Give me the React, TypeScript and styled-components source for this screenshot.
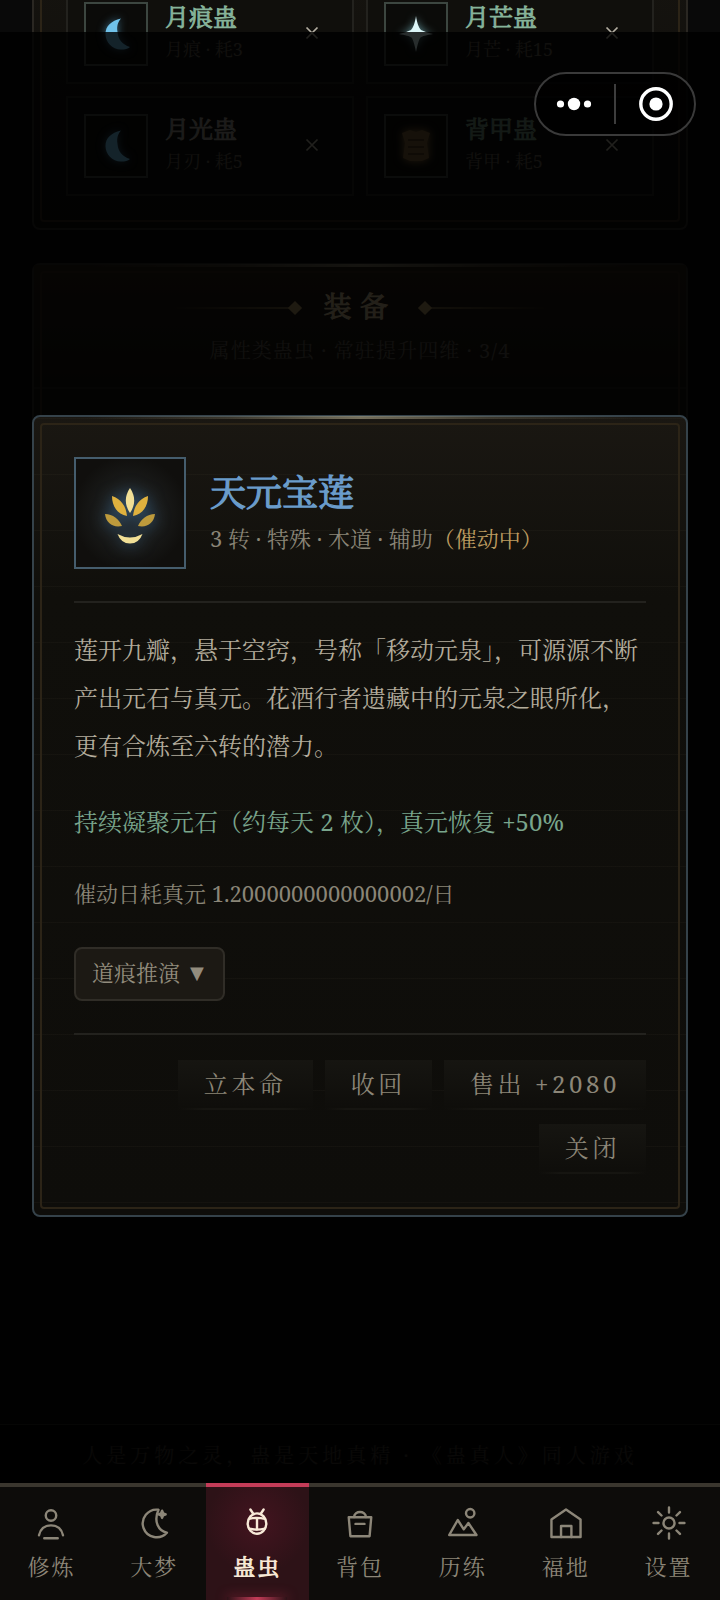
import React from "react";
import styled, { createGlobalStyle, css } from "styled-components";

const Global = createGlobalStyle`
  * { box-sizing: border-box; }
  body { margin: 0; background: #000; }
  button { font: inherit; color: inherit; cursor: pointer; }
`;

const serif = `"Noto Serif", "Noto Serif CJK SC", "Noto Serif SC", "Source Han Serif SC", "Songti SC", "Noto Sans CJK SC", serif`;

const Screen = styled.div`
  position: relative;
  width: 720px;
  height: 1600px;
  overflow: hidden;
  background: #090909;
  color: #948e80;
  font-family: ${serif};
  font-weight: 400;
`;

const Page = styled.main`
  height: 1483px;
  padding: 0 32px;
  display: flex;
  flex-direction: column;
  overflow: hidden;
`;

const framed = css`
  position: relative;
  border: 2px solid #2a2722;
  border-radius: 8px;
  background: linear-gradient(180deg, #15130f, #0e0d0a);
  &::before {
    content: "";
    position: absolute;
    inset: 6px;
    border: 2px solid #2c2417;
    border-radius: 4px;
    pointer-events: none;
  }
`;

const sheen = css`
  &::after {
    content: "";
    position: absolute;
    left: 0;
    right: 0;
    top: -1px;
    height: 3px;
    background: linear-gradient(90deg, transparent 8%, rgba(155, 148, 122, 0.25) 30%, rgba(155, 148, 122, 0.7) 50%, rgba(155, 148, 122, 0.25) 70%, transparent 92%);
  }
`;

const SlotPanel = styled.section`
  ${framed}
  flex: none;
  height: 250px;
  margin-top: -20px;
  padding: 4px 32px 32px;
  border-top: 0;
  border-radius: 0 0 8px 8px;
  &::before { top: -2px; border-top: 0; }
`;

const SlotGrid = styled.div`
  display: grid;
  grid-template-columns: 1fr 1fr;
  grid-auto-rows: 100px;
  gap: 12px;
`;

const Slot = styled.article`
  display: flex;
  align-items: center;
  gap: 16px;
  padding: 0 16px;
  border: 2px solid #23221e;
  background: #100f0c;
`;

const SlotIcon = styled.div`
  flex: none;
  width: 64px;
  height: 64px;
  display: grid;
  place-items: center;
  border: 2px solid #3c4640;
  background: #0b0b09;
`;

const SlotText = styled.div`
  flex: 1;
  display: flex;
  flex-direction: column;
  gap: 1px;
  padding: 0 0 6px 1px;
`;

const SlotName = styled.h3<{ $color: string }>`
  margin: 0;
  font-size: 24px;
  line-height: 34px;
  font-weight: 400;
  -webkit-text-stroke: 0.9px currentColor;
  color: ${(p) => p.$color};
`;

const SlotMeta = styled.span`
  font-size: 18px;
  line-height: 28px;
  color: #605b51;
`;

const SlotClose = styled.button`
  width: 44px;
  margin-right: 2px;
  padding: 0 0 2px;
  border: 0;
  background: none;
  display: grid;
  place-items: center;
  color: #b4afa3;
`;

const EquipPanel = styled.section`
  ${framed}
  ${sheen}
  flex: none;
  height: 900px;
  margin-top: 33px;
  text-align: center;
`;

const EquipHeader = styled.header`
  height: 124px;
  padding-top: 20px;
  border-bottom: 2px solid #201d18;
  background: linear-gradient(180deg, #241d14, #14120e);
`;

const EquipHeading = styled.div`
  display: flex;
  align-items: center;
  justify-content: center;
  gap: 24px;
  height: 46px;
`;

const EquipTitle = styled.h2`
  margin: -5px 0 0;
  font-size: 28px;
  line-height: 46px;
  letter-spacing: 8.4px;
  font-weight: 400;
  -webkit-text-stroke: 1px currentColor;
  color: #c2b08c;
`;

const Flourish = styled.span<{ $flip?: boolean }>`
  display: flex;
  align-items: center;
  transform: ${(p) => (p.$flip ? "scaleX(-1)" : "none")};
  &::before {
    content: "";
    width: 118px;
    height: 2px;
    background: linear-gradient(90deg, transparent, #66583a);
  }
  &::after {
    content: "";
    width: 10px;
    height: 10px;
    background: #a8925f;
    transform: rotate(45deg);
  }
`;

const EquipNote = styled.p`
  margin: 3px 0 0;
  font-size: 20px;
  line-height: 34px;
  letter-spacing: 1.1px;
  color: #5c574d;
`;

const Footer = styled.footer`
  position: absolute;
  left: 0;
  right: 0;
  top: 1424px;
  height: 59px;
  border-top: 1px solid #26231e;
  background: #050505;
  text-align: center;
  font-size: 20px;
  line-height: 62px;
  letter-spacing: 4px;
  white-space: nowrap;
  color: #37332d;
`;

const Backdrop = styled.div`
  position: absolute;
  inset: 32px 0 117px;
  background: rgba(0, 0, 0, 0.82);
`;

const Dialog = styled.section`
  ${framed}
  ${sheen}
  position: absolute;
  left: 32px;
  right: 32px;
  top: 415px;
  height: 802px;
  padding: 40px;
  border-color: #35424a;
  background:
    repeating-linear-gradient(180deg, transparent 0 1px, rgba(210, 190, 150, 0.03) 1px 2px, transparent 2px 56px),
    linear-gradient(180deg, #1a1712 0, #100f0b 180px, #0e0d0a 100%);
`;

const Head = styled.header`
  display: flex;
  gap: 24px;
  height: 146px;
  border-bottom: 2px solid #23221e;
`;

const Portrait = styled.div`
  width: 112px;
  height: 112px;
  display: grid;
  place-items: center;
  border: 2px solid #455d6d;
  background: radial-gradient(circle, #232b31 0, #191a19 42%, #100f0d 75%);
`;

const HeadText = styled.div`
  display: flex;
  flex-direction: column;
  padding-top: 10px;
`;

const Title = styled.h1`
  margin: 0;
  font-size: 36px;
  line-height: 52px;
  font-weight: 400;
  -webkit-text-stroke: 1.2px currentColor;
  color: #6a9ccb;
`;

const Kind = styled.p`
  margin: 1.5px 0 0;
  font-size: 22px;
  line-height: 34px;
  color: #8a8577;
`;

const Active = styled.span`
  color: #bd9c60;
`;

const Lore = styled.p`
  margin: 23px 0 0;
  font-size: 24px;
  line-height: 48px;
  color: #b3ac9c;
`;

const Effect = styled.p`
  margin: 32px 0 0;
  font-size: 24px;
  line-height: 40px;
  color: #79a58c;
`;

const Upkeep = styled.p`
  margin: 33px 0 0;
  font-size: 22px;
  line-height: 36px;
  color: #8a8577;
`;

const Toggle = styled.button`
  display: flex;
  align-items: center;
  gap: 10px;
  width: 151px;
  height: 54px;
  margin: 36px 0 0;
  padding: 0 16px 5px;
  border: 2px solid #302d27;
  border-radius: 8px;
  background: #1c1914;
  font-size: 22px;
  line-height: 44px;
  white-space: nowrap;
  color: #928c7d;
`;

const Caret = styled.span`
  padding-top: 3px;
  font-family: "DejaVu Sans", sans-serif;
  font-size: 18px;
`;

const Actions = styled.div`
  display: flex;
  flex-wrap: wrap;
  justify-content: flex-end;
  gap: 12px;
  margin-top: 32px;
  padding-top: 25px;
  border-top: 2px solid #23221e;
`;

const Action = styled.button`
  height: 52px;
  padding: 0 26px 5px;
  border: 0;
  background:
    linear-gradient(90deg, transparent, #161511 20% 80%, transparent) 0 calc(100% - 2px) / 100% 2px no-repeat,
    linear-gradient(180deg, #161511, #0e0d0a);
  font-size: 24px;
  letter-spacing: 3.6px;
  line-height: 46px;
  color: #8c8678;
`;

const Capsule = styled.div`
  position: absolute;
  left: 534px;
  top: 72px;
  width: 162px;
  height: 64px;
  display: grid;
  grid-template-columns: 78px 2px 78px;
  align-items: center;
  justify-items: center;
  border: 2px solid #3a3a3a;
  border-radius: 32px;
  background: rgba(0, 0, 0, 0.6);
`;

const CapsuleDots = styled.svg`
  margin-right: 2px;
`;

const CapsuleRing = styled.svg`
  margin-left: 2px;
`;

const CapsuleRule = styled.span`
  width: 2px;
  height: 40px;
  background: #3d3d3d;
`;

const Nav = styled.nav`
  position: relative;
  display: grid;
  grid-template-columns: repeat(7, 1fr);
  height: 117px;
  background: #0d0c0a;
`;

const NavItem = styled.a<{ $active?: boolean }>`
  position: relative;
  display: flex;
  flex-direction: column;
  align-items: center;
  border-top: 4px solid ${(p) => (p.$active ? "#c43c58" : "#3a362e")};
  padding-top: 18px;
  color: ${(p) => (p.$active ? "#f8ead8" : "#8c8678")};
  background: ${(p) => (p.$active ? "radial-gradient(circle at 50% 32%, #43141f, #2d1217 55%)" : "none")};
  ${(p) =>
    p.$active &&
    css`
      &::after {
        content: "";
        position: absolute;
        bottom: 0;
        width: 60px;
        height: 3px;
        background: linear-gradient(90deg, transparent, #c43c58, transparent);
        box-shadow: 0 0 12px #a02840;
      }
    `}
`;

const NavLabel = styled.span<{ $active?: boolean }>`
  margin-top: 8px;
  font-size: 22px;
  line-height: 34px;
  letter-spacing: 2px;
  -webkit-text-stroke: ${(p) => (p.$active ? "0.9px" : "0")} currentColor;
`;

const Glyph = styled.svg<{ $glow: string; $spread?: number }>`
  overflow: visible;
  filter: drop-shadow(0 0 ${(p) => p.$spread ?? 4}px ${(p) => p.$glow});
`;

const Moon = () => (
  <Glyph width="44" height="44" viewBox="0 0 44 44" $glow="#3b6880">
    <path d="M27 6.5C17 9 11.5 14 11.5 22C11.5 30 18 37.5 27 37.5C31 37.5 34 37 36 35C28 32.5 24 27 23.5 20C22.5 14 24 10 27 6.5Z" fill="#70c2ea" />
  </Glyph>
);

const Star = () => (
  <Glyph width="44" height="44" viewBox="0 0 44 44" $glow="#5f8f95">
    <path d="M22 4C23 11 25 16 27 18C31 20 35 21 39 22C33 23 28 24 26 26C24 30 23 35 22 40C21 35 20 30 18 26C16 24 11 23 5 22C9 21 13 20 17 18C19 16 21 11 22 4Z" fill="#dcf6f8" />
  </Glyph>
);

const Shell = () => (
  <Glyph width="44" height="44" viewBox="0 0 44 44" $glow="#a07a42" $spread={5}>
    <path d="M8 9L16 6L22 8L28 6L36 9L33 19L35 34L28 37H16L9 34L11 19Z" fill="#7a6038" />
    <path d="M14 16H30M14 23H30M14 30H30" stroke="#543f22" strokeWidth="2" />
  </Glyph>
);

const Lotus = () => (
  <Glyph width="64" height="64" viewBox="0 0 64 64" $glow="#3a6284" $spread={8}>
    <path d="M32 7C37.6 15 37.6 24 32 32C26.4 24 26.4 15 32 7Z" fill="#f1df96" />
    <path d="M14 15C23 18 28 25 29 35C19 33 14 25 14 15ZM50 15C41 18 36 25 35 35C45 33 50 25 50 15Z" fill="#dfb13e" />
    <path d="M7 33C15 33 21 38 24 45C15 47 8 42 7 33ZM57 33C49 33 43 38 40 45C49 47 56 42 57 33Z" fill="#bd9a3c" />
    <path d="M19.5 53Q32 60 44.5 53Q41 62.5 32 62.5Q23 62.5 19.5 53Z" fill="#f1df96" />
  </Glyph>
);

const Cross = () => (
  <svg width="14" height="14" viewBox="0 0 14 14" stroke="currentColor" strokeWidth="1.7">
    <path d="M1.5 1.5L12.5 12.5M12.5 1.5L1.5 12.5" />
  </svg>
);

const icons: Record<string, React.ReactNode> = {
  修炼: (<><circle cx="12" cy="7" r="3.5" /><path d="M4 20.2C5 15.6 8 13.6 12 13.6S19 15.6 20 20.2M7.5 22.2H16.5" /></>),
  大梦: (<><path d="M15 3.2A9.2 9.2 0 1 0 20.6 18.4C15 17.5 11.5 11 15 3.2Z" /><path d="M17.4 3.8L18.1 5.5L19.8 6.2L18.1 6.9L17.4 8.6L16.7 6.9L15 6.2L16.7 5.5Z" fill="currentColor" /></>),
  蛊虫: (<><ellipse cx="12" cy="12.4" rx="6.2" ry="6.8" /><path d="M9.6 6L7.6 3M14.4 6L16.4 3M12 8.8V16.5M6.8 9.2Q12 8 17.2 9.2M6.8 15.8Q12 17 17.2 15.8" /></>),
  背包: (<><path d="M4.5 8.2H19.5L18.4 20.8H5.6Z" /><path d="M8 8C8.5 3.6 15.5 3.6 16 8M9 12.6H15" /></>),
  历练: (<><path d="M2.8 20L8.5 10L12.5 16.2L15.6 12L21 20Z" /><circle cx="16.8" cy="5.5" r="2.8" /></>),
  福地: (<><path d="M2.3 21.3V9.7L12 3L21.7 9.7V21.3Z" /><path d="M8.7 21.3V14H15.6V21.3" /></>),
  设置: (<><circle cx="12" cy="12" r="3.7" /><path d="M12 1.7V5M12 19V22.3M1.7 12H5M19 12H22.3M4.7 4.7L7 7M17 17L19.3 19.3M4.7 19.3L7 17M17 7L19.3 4.7" /></>),
};

const slots = [
  { name: "月痕蛊", meta: "月痕 · 耗3", color: "#86b39a", icon: <Moon /> },
  { name: "月芒蛊", meta: "月芒 · 耗15", color: "#86b39a", icon: <Star /> },
  { name: "月光蛊", meta: "月刃 · 耗5", color: "#9a978f", icon: <Moon /> },
  { name: "背甲蛊", meta: "背甲 · 耗5", color: "#6f917d", icon: <Shell /> },
];

export default function App() {
  return (
    <Screen>
      <Global />
      <Page>
        <SlotPanel>
          <SlotGrid>
            {slots.map((s) => (
              <Slot key={s.name}>
                <SlotIcon>{s.icon}</SlotIcon>
                <SlotText>
                  <SlotName $color={s.color}>{s.name}</SlotName>
                  <SlotMeta>{s.meta}</SlotMeta>
                </SlotText>
                <SlotClose aria-label="卸下"><Cross /></SlotClose>
              </Slot>
            ))}
          </SlotGrid>
        </SlotPanel>
        <EquipPanel>
          <EquipHeader>
            <EquipHeading>
              <Flourish />
              <EquipTitle>装备</EquipTitle>
              <Flourish $flip />
            </EquipHeading>
            <EquipNote>属性类蛊虫 · 常驻提升四维 · 3/4</EquipNote>
          </EquipHeader>
        </EquipPanel>
      </Page>
      <Footer>人是万物之灵，蛊是天地真精 · 《蛊真人》同人游戏</Footer>
      <Backdrop />
      <Dialog>
        <Head>
          <Portrait><Lotus /></Portrait>
          <HeadText>
            <Title>天元宝莲</Title>
            <Kind>3 转 · 特殊 · 木道 · 辅助<Active>（催动中）</Active></Kind>
          </HeadText>
        </Head>
        <Lore>莲开九瓣，悬于空窍，号称「移动元泉」，可源源不断产出元石与真元。花酒行者遗藏中的元泉之眼所化，更有合炼至六转的潜力。</Lore>
        <Effect>持续凝聚元石（约每天 2 枚），真元恢复 +50%</Effect>
        <Upkeep>催动日耗真元 1.2000000000000002/日</Upkeep>
        <Toggle>道痕推演<Caret>▼</Caret></Toggle>
        <Actions>
          <Action>立本命</Action>
          <Action>收回</Action>
          <Action>售出 +2080</Action>
          <Action>关闭</Action>
        </Actions>
      </Dialog>
      <Capsule>
        <CapsuleDots width="36" height="14" viewBox="0 0 36 14" fill="#fff">
          <circle cx="4.5" cy="7" r="3.6" />
          <circle cx="18" cy="7" r="6.2" />
          <circle cx="31.5" cy="7" r="3.6" />
        </CapsuleDots>
        <CapsuleRule />
        <CapsuleRing width="36" height="36" viewBox="0 0 36 36">
          <circle cx="18" cy="18" r="15.2" fill="none" stroke="#fff" strokeWidth="3.4" />
          <circle cx="18" cy="18" r="6.6" fill="#fff" />
        </CapsuleRing>
      </Capsule>
      <Nav>
        {Object.entries(icons).map(([label, icon]) => {
          const active = label === "蛊虫";
          return (
            <NavItem key={label} $active={active}>
              <svg width="36" height="36" viewBox="0 0 24 24" fill="none" stroke="currentColor" strokeWidth="1.6" strokeLinecap="round" strokeLinejoin="round">
                {icon}
              </svg>
              <NavLabel $active={active}>{label}</NavLabel>
            </NavItem>
          );
        })}
      </Nav>
    </Screen>
  );
}
